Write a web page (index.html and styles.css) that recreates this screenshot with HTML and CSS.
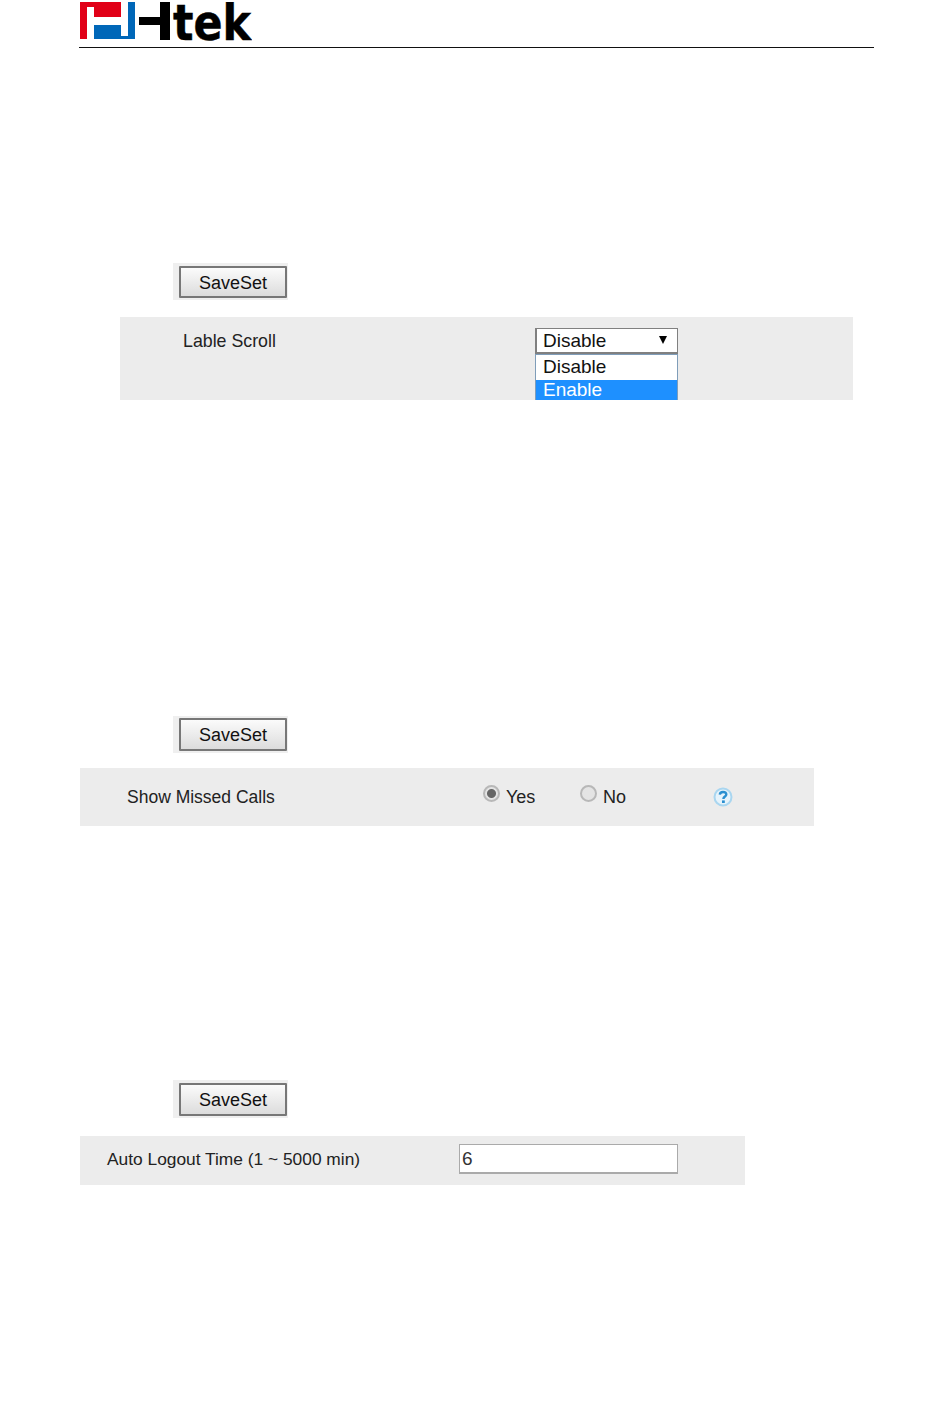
FILE: index.html
```html
<!DOCTYPE html>
<html lang="en">
<head>
<meta charset="utf-8">
<title>Htek settings</title>
<link rel="stylesheet" href="styles.css">
</head>
<body>
<header class="doc-header">
  <svg class="logo" width="172" height="40" viewBox="0 0 172 40" aria-label="Htek">
    <path fill="#e10017" d="M0 0H14V5H7V37H0ZM14 0H41V15H14Z"/>
    <path fill="#0067b8" d="M48 0H55V37H14V23H41V34H48Z"/>
    <path fill="#000" d="M59 15H80V0H90V38H80V23H59Z"/>
    <text class="logo-text" x="93" y="38" textLength="78" lengthAdjust="spacingAndGlyphs">tek</text>
  </svg>
</header>

<section class="block block-scroll">
  <div class="save-frame"><button class="save-btn" type="button">SaveSet</button></div>
  <div class="panel panel-scroll">
    <span class="label label-scroll">Lable Scroll</span>
    <div class="select">
      <div class="select-head">
        <span>Disable</span>
        <svg class="select-arrow" width="8" height="8" viewBox="0 0 8 8"><path fill="#000" d="M0 0H8L4 8Z"/></svg>
      </div>
      <ul class="select-list">
        <li class="option">Disable</li>
        <li class="option option-active">Enable</li>
      </ul>
    </div>
  </div>
</section>

<section class="block block-missed">
  <div class="save-frame save-frame-mid"><button class="save-btn save-btn-mid" type="button">SaveSet</button></div>
  <div class="panel panel-missed">
    <span class="label label-missed">Show Missed Calls</span>
    <label class="choice choice-yes"><input class="radio" type="radio" name="missed" checked><span>Yes</span></label>
    <label class="choice choice-no"><input class="radio" type="radio" name="missed"><span>No</span></label>
    <svg class="help" width="20" height="20" viewBox="0 0 20 20" aria-label="Help">
      <circle cx="10" cy="10" r="8.5" fill="#e6f3fb" stroke="#a9d6f0" stroke-width="2"/>
      <path d="M6.8 7.6C7 5.6 8.6 5 10 5C11.8 5 13.3 6 13.3 7.6C13.3 9.6 10.4 9.6 10.4 12" fill="none" stroke="#2a8fd0" stroke-width="2.4"/>
      <rect x="9" y="13.4" width="2.8" height="2.6" fill="#2a8fd0"/>
    </svg>
  </div>
</section>

<section class="block block-logout">
  <div class="save-frame save-frame-tall"><button class="save-btn save-btn-mid" type="button">SaveSet</button></div>
  <div class="panel panel-logout">
    <span class="label label-logout">Auto Logout Time (1 ~ 5000 min)</span>
    <input class="text-input" type="text" value="6">
  </div>
</section>
</body>
</html>
```
FILE: styles.css
```css
* { box-sizing: border-box; }
html, body { margin: 0; padding: 0; background: #fff; }
body {
  width: 950px;
  height: 1420px;
  overflow: hidden;
  font-family: "Liberation Sans", Arial, sans-serif;
  color: #222;
}

.doc-header {
  margin-left: 79px;
  width: 795px;
  height: 48px;
  padding: 2px 0 0 1px;
  border-bottom: 1px solid #111;
}
.logo { display: block; }
.logo-text {
  font-family: "DejaVu Sans", sans-serif;
  font-weight: 700;
  font-size: 50px;
  fill: #000;
  stroke: #000;
  stroke-width: 0.5;
}

.block-scroll { margin-top: 215px; }
.block-missed { margin-top: 316px; }
.block-logout { margin-top: 254px; }

.save-frame {
  margin-left: 173px;
  width: 115px;
  height: 37px;
  padding: 3px 0 0 6px;
  background: #efefef;
}
.save-frame-mid { padding-top: 2px; }
.save-frame-tall { height: 38px; }
.save-btn {
  display: block;
  width: 108px;
  height: 32px;
  padding: 2px 0 0;
  border: 2px solid #777;
  border-radius: 1px;
  background: linear-gradient(#fbfbfb, #dcdcdc);
  color: #111;
  font: 18px "Liberation Sans", Arial, sans-serif;
}
.save-btn-mid { height: 33px; }

.panel {
  display: flex;
  background: #ececec;
  font-size: 17.5px;
  line-height: 22px;
}
.panel-scroll {
  margin: 17px 0 0 120px;
  width: 733px;
  height: 83px;
  padding: 13px 0 0 63px;
  overflow: hidden;
}
.panel-missed {
  margin: 15px 0 0 80px;
  width: 734px;
  height: 58px;
  padding-left: 47px;
  align-items: center;
}
.panel-logout {
  margin: 18px 0 0 80px;
  width: 665px;
  height: 49px;
  padding-left: 27px;
  align-items: center;
}

.label { display: block; white-space: nowrap; }
.label-scroll { width: 352px; font-size: 17.8px; }
.label-missed { width: 356px; margin-top: -1px; }
.label-logout { width: 352px; margin-top: -4px; font-size: 17.35px; }

.select { width: 143px; margin-top: -2px; font-size: 19px; line-height: 24px; color: #111; }
.select-head {
  display: flex;
  align-items: center;
  justify-content: space-between;
  height: 26px;
  padding: 0 10px 0 6px;
  background: #fff;
  border: 1px solid #808080;
  border-bottom-width: 2px;
  border-left-width: 2px;
}
.select-arrow { display: block; margin-top: -2px; }
.select-list {
  list-style: none;
  margin: 0;
  padding: 0;
  border: 1px solid #7f9db9;
  border-bottom: 0;
  background: #fff;
}
.option { height: 25px; padding-left: 7px; }
.option-active { height: 20px; line-height: 20px; background: #1e90ff; color: #fff; }

.choice { display: flex; align-items: center; white-space: nowrap; font-size: 18px; }
.choice-yes { width: 97px; }
.choice-no { width: 133px; }
.choice span { margin-top: -1px; }
.radio {
  appearance: none;
  display: block;
  width: 17px;
  height: 17px;
  margin: -8px 6px 0 0;
  border: 2px solid #b8b8b8;
  border-radius: 50%;
  background: #e4e4e4;
}
.radio:checked { background: radial-gradient(circle, #666 0 4px, #e4e4e4 5px); }
.help { display: block; margin-top: -1px; }

.text-input {
  display: block;
  width: 219px;
  height: 30px;
  padding: 0 2px;
  margin-top: -3px;
  border: 1px solid #aaa;
  border-width: 1px 1px 2px;
  border-radius: 0;
  background: #fff;
  color: #333;
  font: 19px "Liberation Sans", Arial, sans-serif;
  outline: none;
}
```
